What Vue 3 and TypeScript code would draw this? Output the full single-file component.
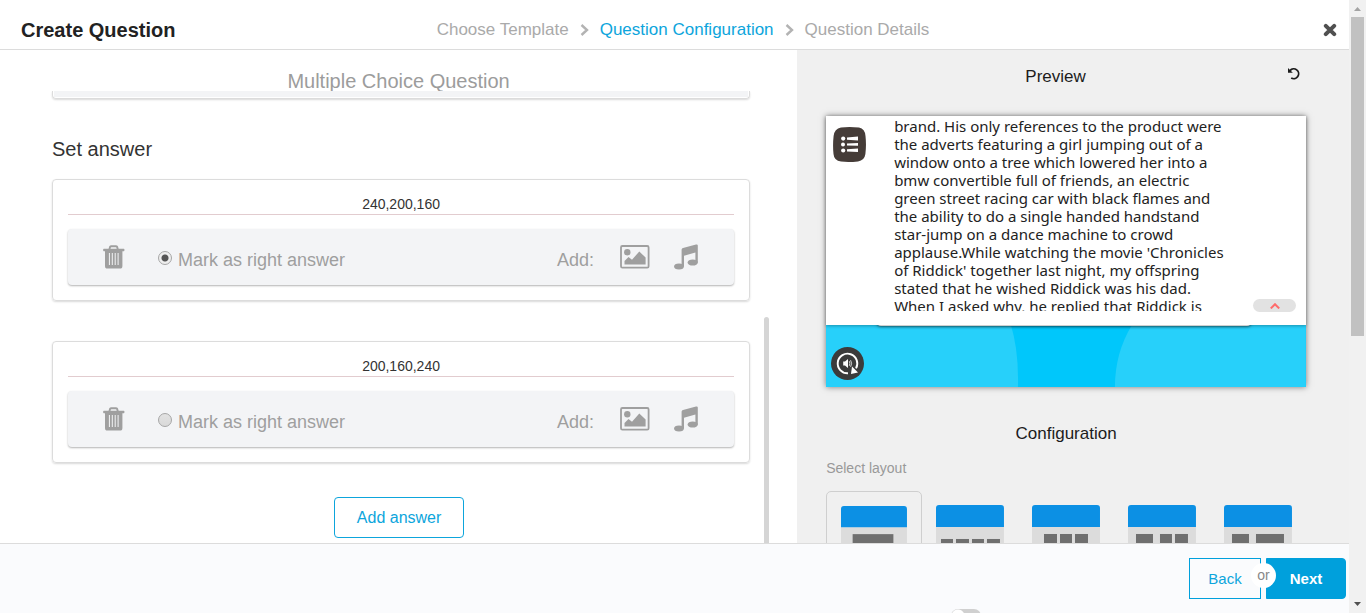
<script setup lang="ts">
import { ref } from 'vue'

interface Answer {
  id: number
  text: string
}

interface Layout {
  id: number
  name: string
  top: number
  blocks: { x: number; w: number }[]
}

const answers = ref<Answer[]>([
  { id: 1, text: '240,200,160' },
  { id: 2, text: '200,160,240' },
])
const rightAnswer = ref(1)
const activeLayout = ref(1)

const passage: string[] = [
  'brand. His only references to the product were',
  'the adverts featuring a girl jumping out of a',
  'window onto a tree which lowered her into a',
  'bmw convertible full of friends, an electric',
  'green street racing car with black flames and',
  'the ability to do a single handed handstand',
  'star-jump on a dance machine to crowd',
  "applause.While watching the movie 'Chronicles",
  "of Riddick' together last night, my offspring",
  'stated that he wished Riddick was his dad.',
  'When I asked why, he replied that Riddick is',
]

const layouts: Layout[] = [
  { id: 1, name: 'Single block', top: 29, blocks: [{ x: 12, w: 42 }] },
  { id: 2, name: 'Four blocks', top: 34, blocks: [{ x: 5, w: 12 }, { x: 20, w: 13 }, { x: 36, w: 12 }, { x: 51, w: 13 }] },
  { id: 3, name: 'Three blocks', top: 29, blocks: [{ x: 12, w: 13 }, { x: 28, w: 12 }, { x: 43, w: 13 }] },
  { id: 4, name: 'One and two blocks', top: 29, blocks: [{ x: 8, w: 17 }, { x: 32, w: 12 }, { x: 47, w: 13 }] },
  { id: 5, name: 'Narrow and wide block', top: 29, blocks: [{ x: 8, w: 17 }, { x: 32, w: 28 }] },
]

function addAnswer() {
  answers.value.push({ id: Date.now(), text: '' })
}
function removeAnswer(id: number) {
  answers.value = answers.value.filter((a) => a.id !== id)
}
</script>

<template>
  <div class="page">
    <div class="main">
      <header class="header">
        <h1 class="title">Create Question</h1>
        <nav class="steps" aria-label="Steps">
          <a href="#template" class="step">Choose Template</a>
          <svg class="chevron" viewBox="0 0 9 12"><path d="M1.5 1 L7 6 L1.5 11" /></svg>
          <a href="#configuration" class="step current" aria-current="step">Question Configuration</a>
          <svg class="chevron" viewBox="0 0 9 12"><path d="M1.5 1 L7 6 L1.5 11" /></svg>
          <a href="#details" class="step">Question Details</a>
        </nav>
        <button class="close" type="button" aria-label="Close">
          <svg viewBox="0 0 14 14" width="14" height="14"><path d="M2.8 2.8 L11.2 11.2 M11.2 2.8 L2.8 11.2" /></svg>
        </button>
      </header>

      <div class="body">
        <section class="editor">
          <h2 class="editor-title">Multiple Choice Question</h2>
          <div class="scroll">
            <div class="content">
              <div class="question-end"><div class="question-bar"></div></div>
              <h3 class="set-title">Set answer</h3>
              <div v-for="a in answers" :key="a.id" class="card">
                <input v-model="a.text" class="answer-input" type="text" aria-label="Answer" />
                <div class="toolbar">
                  <button class="icon-btn trash" type="button" aria-label="Delete answer" @click="removeAnswer(a.id)">
                    <svg width="22" height="24" viewBox="0 0 22 24">
                      <path d="M6.4 4.5 L7 2 Q7.4 1.2 8.4 1.2 H12.8 Q13.8 1.2 14.2 2 L14.8 4.5" fill="none" stroke="#9f9f9f" stroke-width="1.9" />
                      <rect x="0.2" y="3.8" width="21.2" height="2.4" rx="0.6" />
                      <path fill-rule="evenodd" d="M2 6 H19.4 V21 Q19.4 23.6 17 23.6 H4.4 Q2 23.6 2 21 Z M5.9 8 V20 H6.9 V8 Z M8.8 8 V20 H9.8 V8 Z M11.7 8 V20 H12.7 V8 Z M14.6 8 V20 H15.6 V8 Z" />
                    </svg>
                  </button>
                  <label class="mark">
                    <input v-model="rightAnswer" type="radio" name="right" :value="a.id" />
                    <span>Mark as right answer</span>
                  </label>
                  <span class="add-label">Add:</span>
                  <button class="icon-btn image" type="button" aria-label="Add image">
                    <svg width="30" height="24" viewBox="0 0 30 24">
                      <rect x="1" y="1" width="27.6" height="21.6" rx="1.4" fill="none" stroke="#9f9f9f" stroke-width="1.8" />
                      <circle cx="7.3" cy="7.2" r="3.2" />
                      <path d="M4.5 19.4 V16 L8.5 12 L12 14.8 L19.3 6.4 L25.6 12.6 V19.4 Z" />
                    </svg>
                  </button>
                  <button class="icon-btn music" type="button" aria-label="Add sound">
                    <svg width="24" height="26" viewBox="0 0 24 26">
                      <path d="M7.6 5.4 Q7.8 4.4 9 4 L22 0.6 Q23.8 0.2 23.8 1.6 V18.4 H21.4 V8.6 L10 11.8 V22.4 H7.6 Z" />
                      <ellipse cx="5" cy="22.4" rx="4.9" ry="3" />
                      <ellipse cx="18.7" cy="18.5" rx="5.1" ry="3.1" />
                    </svg>
                  </button>
                </div>
              </div>
              <button class="add-answer" type="button" @click="addAnswer">Add answer</button>
            </div>
            <div class="track"><div class="thumb"></div></div>
          </div>
        </section>

        <aside class="side">
          <div class="preview-head">
            <h2 class="side-title">Preview</h2>
            <button class="reload" type="button" aria-label="Reload preview">
              <svg width="14" height="14" viewBox="0 0 14 14">
                <path d="M3 3.6 A4.9 4.9 0 1 1 4.2 11" fill="none" stroke="#1c1c1c" stroke-width="1.8" />
                <path d="M1 1 V5.8 H5.8 Z" fill="#1c1c1c" />
              </svg>
            </button>
          </div>

          <div class="preview">
            <svg class="backdrop" viewBox="0 0 480 62" preserveAspectRatio="none">
              <rect width="480" height="62" fill="#00c7fb" />
              <path d="M0 0 H185 Q193 27 192 62 H0 Z" fill="#27d0fa" />
              <path d="M480 0 H306 Q289 28 289 62 H480 Z" fill="#27d0fa" />
            </svg>
            <div class="sheet-foot"></div>
            <div class="sheet">
              <button class="menu" type="button" aria-label="Show answers">
                <svg width="33" height="35" viewBox="0 0 33 35">
                  <path d="M8 0.6 Q16 -0.6 26 0.6 Q32 2 32.5 9 Q33.5 18 32.4 27 Q31.5 33.5 25 34.4 Q16 35.4 8 34.6 Q1 33.6 0.5 27 Q-0.4 18 0.6 9 Q1.4 2 8 0.6 Z" fill="#453c38" />
                  <g fill="#fff">
                    <circle cx="10.2" cy="11.6" r="2.1" />
                    <circle cx="10" cy="17.6" r="2" />
                    <circle cx="10.2" cy="23.5" r="2.1" />
                    <path d="M14 10.4 L25 9.4 V13.4 L14 12.8 Z M14 16.4 L25 16 V18.8 L14 18.6 Z M14 22.2 L25 21.6 V25 L14 24.6 Z" />
                  </g>
                </svg>
              </button>
              <p class="passage">
                <span v-for="line in passage" :key="line">{{ line }}</span>
              </p>
              <button class="up" type="button" aria-label="Scroll up">
                <svg width="10" height="6" viewBox="0 0 10 6"><path d="M0.8 5.4 L5 1.2 L9.2 5.4" /></svg>
              </button>
            </div>
            <button class="sound" type="button" aria-label="Play sound">
              <svg width="33" height="33" viewBox="0 0 33 33">
                <circle cx="16.5" cy="16.5" r="16.5" fill="#3b3b3b" />
                <path d="M17 26.3 A9.8 9.8 0 1 1 25 21.4" fill="none" stroke="#fff" stroke-width="1.9" />
                <path d="M21 19.6 L27 25.4 L20 27 Z" fill="#fff" />
                <path d="M12.2 14.5 H14 L17 12 V21 L14 18.5 H12.2 Z" fill="#fff" />
                <path d="M18.3 14.2 Q19.5 16.5 18.3 18.8 M19.6 13.2 Q21.6 16.5 19.6 19.8" fill="none" stroke="#fff" stroke-width="0.8" />
              </svg>
            </button>
          </div>

          <h2 class="side-title config-title">Configuration</h2>
          <p class="select-label">Select layout</p>
          <div class="layouts">
            <button
              v-for="l in layouts"
              :key="l.id"
              type="button"
              class="layout"
              :class="{ active: l.id === activeLayout }"
              :aria-label="l.name"
              @click="activeLayout = l.id"
            >
              <svg viewBox="0 0 68 68">
                <path d="M0 22 H68 V68 H0 Z" fill="#dcdcdc" />
                <path d="M0 22 V3 Q0 0 3 0 H65 Q68 0 68 3 V22 Z" fill="#0c90e4" />
                <rect v-for="b in l.blocks" :key="b.x" :x="b.x" :y="l.top" :width="b.w" height="20" fill="#6f6f6f" />
              </svg>
            </button>
          </div>
        </aside>
      </div>

      <footer class="footer">
        <span class="switch"></span>
        <button class="back" type="button">Back</button>
        <span class="or">or</span>
        <button class="next" type="button">Next</button>
      </footer>
    </div>

    <div class="scrollbar">
      <svg width="17" height="17" viewBox="0 0 17 17"><path d="M5 11 L8.5 7 L12 11 Z" fill="#a3a3a3" /></svg>
      <div class="scroll-thumb"></div>
      <svg class="down" width="17" height="17" viewBox="0 0 17 17"><path d="M5 6 L8.5 10 L12 6 Z" fill="#505050" /></svg>
    </div>
  </div>
</template>

<style>
body {
  margin: 0;
  background: #fff;
}
</style>

<style scoped>
* {
  box-sizing: border-box;
}
button,
input {
  font-family: inherit;
  margin: 0;
}
button {
  border: 0;
  background: none;
  padding: 0;
  cursor: pointer;
}
svg {
  display: block;
}
h1,
h2,
h3,
p {
  margin: 0;
  font-weight: 400;
}
.page {
  display: flex;
  height: 100vh;
  overflow: hidden;
  font-family: 'Liberation Sans', Arial, sans-serif;
  color: #333;
}
.main {
  flex: 1;
  min-width: 0;
  display: flex;
  flex-direction: column;
}
.header {
  flex: none;
  display: grid;
  grid-template-columns: 1fr auto 1fr;
  align-items: center;
  height: 50px;
  padding: 11px 12px 0 21px;
  border-bottom: 1px solid #dcdcdc;
}
.title {
  font-size: 20px;
  font-weight: 700;
  line-height: 24px;
  color: #222;
}
.steps {
  display: flex;
  align-items: center;
  gap: 11px;
  margin-left: 8px;
  font-size: 17px;
  line-height: 20px;
}
.step {
  color: #aaa;
  text-decoration: none;
}
.step.current {
  color: #0da5dc;
}
.chevron {
  width: 9px;
  height: 12px;
  fill: none;
  stroke: #b3b3b3;
  stroke-width: 2.4;
}
.close {
  justify-self: end;
}
.close path {
  stroke: #505050;
  stroke-width: 4;
  stroke-linecap: round;
}
.body {
  flex: 1;
  min-height: 0;
  display: grid;
  grid-template-columns: 13fr 9fr;
  grid-template-rows: minmax(0, 1fr);
  overflow: hidden;
}
.editor {
  min-width: 0;
  min-height: 0;
  display: flex;
  flex-direction: column;
}
.editor-title {
  flex: none;
  height: 41px;
  padding-top: 19px;
  text-align: center;
  font-size: 20px;
  line-height: 24px;
  color: #9c9c9c;
}
.scroll {
  flex: 1;
  min-height: 0;
  display: flex;
  overflow: hidden;
}
.content {
  flex: 1;
  min-width: 0;
  padding-left: 52px;
  display: flex;
  flex-direction: column;
}
.track {
  display: flex;
  align-items: flex-end;
  width: 47px;
  padding-left: 14px;
}
.thumb {
  width: 5px;
  height: 50%;
  border-radius: 3px 3px 0 0;
  background: #d5d5d5;
}
.question-end {
  flex: none;
  height: 8px;
  border: 1px solid #dcdcdc;
  border-top: 0;
  border-radius: 0 0 4px 4px;
  box-shadow: 0 1px 2px rgba(0, 0, 0, 0.15);
  padding: 0 1px 1px;
}
.question-bar {
  height: 100%;
  background: #f3f4f6;
}
.set-title {
  margin: 38px 0 18px;
  font-size: 20px;
  line-height: 24px;
}
.card {
  flex: none;
  margin-bottom: 40px;
  padding: 15px;
  border: 1px solid #dcdcdc;
  border-radius: 4px;
  box-shadow: 0 1px 2px rgba(0, 0, 0, 0.15);
}
.answer-input {
  display: block;
  width: 100%;
  height: 20px;
  padding: 0 0 2px;
  border: 0;
  border-bottom: 1px solid #e2cccf;
  background: none;
  text-align: center;
  font-size: 14px;
  color: #333;
  outline: 0;
}
.toolbar {
  display: flex;
  align-items: center;
  height: 56px;
  margin-top: 14px;
  padding: 0 36px 0 35px;
  border-radius: 4px;
  background: #f3f4f6;
  box-shadow: 0 1px 2px rgba(0, 0, 0, 0.3);
  font-size: 18px;
  line-height: 22px;
  color: #9f9f9f;
}
.icon-btn {
  fill: #9f9f9f;
}
.mark {
  display: flex;
  align-items: center;
  gap: 6px;
  margin-left: 33px;
  padding-top: 6px;
}
.mark input {
  appearance: none;
  width: 14px;
  height: 14px;
  margin-bottom: 4px;
  border: 1px solid #a6a6a6;
  border-radius: 50%;
  background: linear-gradient(#e2e2e2, #d9d9d9);
}
.mark input:checked {
  background: radial-gradient(circle, #555 0 3px, #eee 4px);
}
.add-label {
  margin-left: auto;
  padding-top: 6px;
}
.image {
  margin-left: 26px;
}
.music {
  margin-left: 24px;
}
.add-answer {
  flex: none;
  align-self: center;
  margin: -6px 4px 0 0;
  width: 130px;
  height: 41px;
  border: 1px solid #0da5dc;
  border-radius: 4px;
  background: #fff;
  font-size: 16px;
  color: #0da5dc;
}
.side {
  min-width: 0;
  padding: 0 43px 0 29px;
  background: #f0f0f0;
  display: flex;
  flex-direction: column;
  overflow: hidden;
}
.side-title {
  flex: none;
  font-size: 17px;
  line-height: 22px;
  text-align: center;
  color: #1c1c1c;
}
.preview-head {
  flex: none;
  display: flex;
  align-items: flex-start;
  height: 66px;
  padding-top: 16px;
}
.preview-head .side-title {
  flex: 1;
}
.reload {
  width: 21px;
  padding: 1px 0 0 2px;
}
.preview {
  position: relative;
  flex: none;
  height: 271px;
  box-shadow: 0 0 6px rgba(0, 0, 0, 0.5);
  background: #00c7fb;
}
.backdrop {
  position: absolute;
  left: 0;
  bottom: 0;
  width: 100%;
  height: 62px;
}
.sheet {
  position: relative;
  display: flex;
  align-items: flex-start;
  height: 209px;
  padding: 5px 10px 0 7px;
  background: #fff;
  box-shadow: 0 1px 3px rgba(0, 0, 0, 0.3);
}
.sheet-foot {
  position: absolute;
  left: 51px;
  right: 55px;
  top: 200px;
  height: 10px;
  border-radius: 0 0 4px 4px;
  background: #fff;
  box-shadow: 0 1px 3px rgba(0, 0, 0, 0.5);
}
.menu {
  margin-top: 6px;
}
.passage {
  flex: 1;
  min-width: 0;
  height: 190px;
  margin-left: 28px;
  display: flex;
  flex-direction: column;
  overflow: hidden;
  font-family: 'Noto Sans', sans-serif;
  font-size: 15px;
  line-height: 18px;
  color: #222;
  white-space: nowrap;
}
.passage span:first-child {
  margin-top: -4px;
}
.up {
  align-self: flex-end;
  display: flex;
  align-items: center;
  justify-content: center;
  width: 43px;
  height: 13px;
  margin-bottom: 13px;
  border-radius: 7px;
  background: #e2e2e2;
}
.up path {
  fill: none;
  stroke: #ff6b6b;
  stroke-width: 2;
}
.sound {
  position: absolute;
  left: 5px;
  bottom: 7px;
}
.config-title {
  margin-top: 36px;
}
.select-label {
  flex: none;
  margin-top: 14px;
  font-size: 14px;
  line-height: 18px;
  color: #999;
}
.layouts {
  flex: none;
  display: grid;
  grid-template-columns: repeat(5, 1fr);
  align-items: start;
  margin-top: 14px;
}
.layout {
  padding: 14px;
  border-radius: 5px;
}
.layout.active {
  border: 1px solid #cfcfcf;
}
.layout svg {
  width: 100%;
}
.footer {
  position: relative;
  z-index: 1;
  flex: none;
  display: flex;
  justify-content: flex-end;
  align-items: flex-start;
  height: 70px;
  padding: 14px 3px 0 0;
  border-top: 1px solid #dcdcdc;
  background: #fafbfd;
  overflow: hidden;
}
.back,
.next {
  height: 41px;
  border: 1px solid #00a0dc;
  font-size: 15px;
}
.back {
  width: 72px;
  color: #0da5dc;
}
.next {
  width: 80px;
  border-radius: 0 4px 4px 0;
  background: #00a0dc;
  font-weight: 700;
  color: #fff;
}
.or {
  z-index: 1;
  width: 25px;
  height: 25px;
  margin: 5px -10px 0;
  border-radius: 50%;
  background: #fff;
  text-align: center;
  font-size: 14px;
  line-height: 25px;
  color: #888;
}
.switch {
  position: absolute;
  right: 368px;
  top: 65px;
  width: 30px;
  height: 14px;
  border-radius: 7px;
  background: radial-gradient(circle at 7px 7px, #fff 6px, #d0d0d0 7px);
}
.scrollbar {
  flex: none;
  display: flex;
  flex-direction: column;
  width: 17px;
  background: #f1f1f1;
}
.scroll-thumb {
  height: 52%;
  margin: 0 2px;
  background: #c1c1c1;
}
.down {
  margin-top: auto;
}
</style>
